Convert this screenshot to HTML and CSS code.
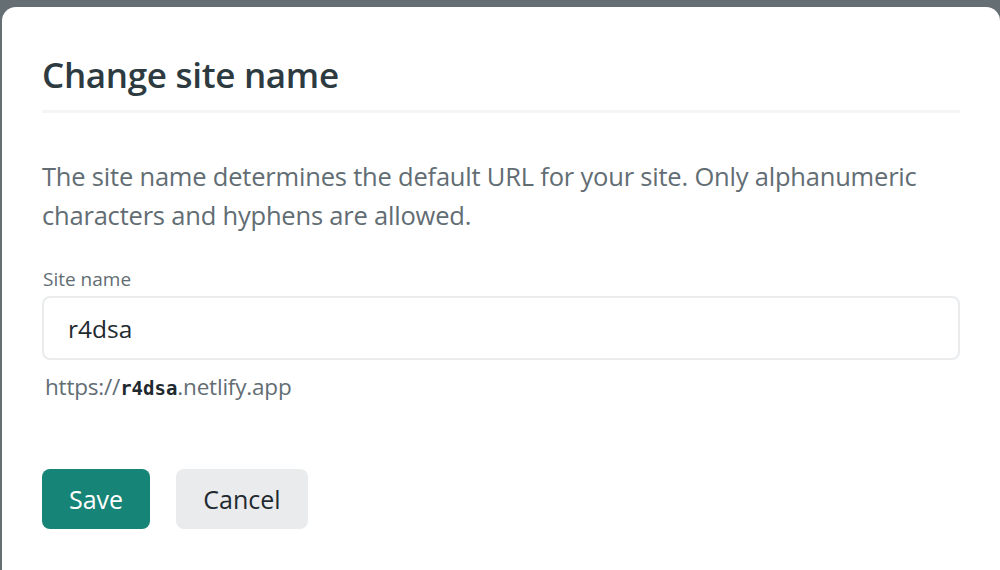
FILE: index.html
```html
<!DOCTYPE html>
<html lang="en">
<head>
<meta charset="utf-8">
<title>Change site name</title>
<link rel="stylesheet" href="styles.css">
</head>
<body>
<div class="dialog">
  <h1 class="title">Change site name</h1>
  <p class="desc">The site name determines the default URL for your site. Only alphanumeric characters and hyphens are allowed.</p>
  <form class="form">
    <label class="label" for="site">Site name</label>
    <input class="input" id="site" type="text" value="r4dsa">
    <div class="hint">https://<code class="mono">r4dsa</code>.netlify.app</div>
    <div class="actions">
      <button type="button" class="btn btn-primary">Save</button>
      <button type="button" class="btn btn-secondary">Cancel</button>
    </div>
  </form>
</div>
</body>
</html>
```

FILE: styles.css
```css
html, body {
  margin: 0;
  padding: 0;
  height: 100%;
  overflow: hidden;
}
body {
  background: #646e73;
  padding: 7px 0 0 2px;
  box-sizing: border-box;
  font-family: "Open Sans", "Noto Sans", sans-serif;
}
.dialog {
  background: #ffffff;
  border-radius: 14px 14px 0 0;
  height: 100%;
  padding: 0 40px;
  box-sizing: border-box;
}
.title {
  margin: 0;
  padding: 48px 0 15px;
  font-size: 35px;
  font-weight: 600;
  color: #2d3b41;
  line-height: 40px;
  border-bottom: 3px solid #f4f5f6;
  letter-spacing: -0.3px;
}
.desc {
  margin: 44px 0 0;
  font-size: 25.5px;
  line-height: 39px;
  color: #626d73;
  letter-spacing: -0.2px;
}
.form {
  display: flex;
  flex-direction: column;
  align-items: flex-start;
}
.label {
  margin-top: 31px;
  font-size: 19px;
  line-height: 26px;
  color: #626d73;
  padding-left: 1px;
}
.input {
  margin-top: 4px;
  width: 100%;
  height: 64px;
  box-sizing: border-box;
  border: 2px solid #e9ebed;
  border-radius: 8px;
  padding: 0 24px;
  font-family: inherit;
  font-size: 24.5px;
  color: #1f2a30;
  outline: none;
}
.hint {
  margin-top: 12px;
  padding-left: 3px;
  font-size: 22.5px;
  line-height: 30px;
  color: #626d73;
  letter-spacing: -0.2px;
}
.mono {
  font-family: "DejaVu Sans Mono", "Liberation Mono", monospace;
  font-size: 19px;
  font-weight: 600;
  color: #1f2a30;
  letter-spacing: 0;
}
.actions {
  margin-top: 66px;
  display: flex;
  gap: 26px;
}
.btn {
  height: 60px;
  border: none;
  border-radius: 8px;
  font-family: inherit;
  font-size: 25px;
  padding: 0;
  cursor: pointer;
}
.btn-primary {
  background: #168477;
  color: #ffffff;
  width: 108px;
}
.btn-secondary {
  background: #e9ebed;
  color: #1f2a30;
  width: 132px;
}
```
